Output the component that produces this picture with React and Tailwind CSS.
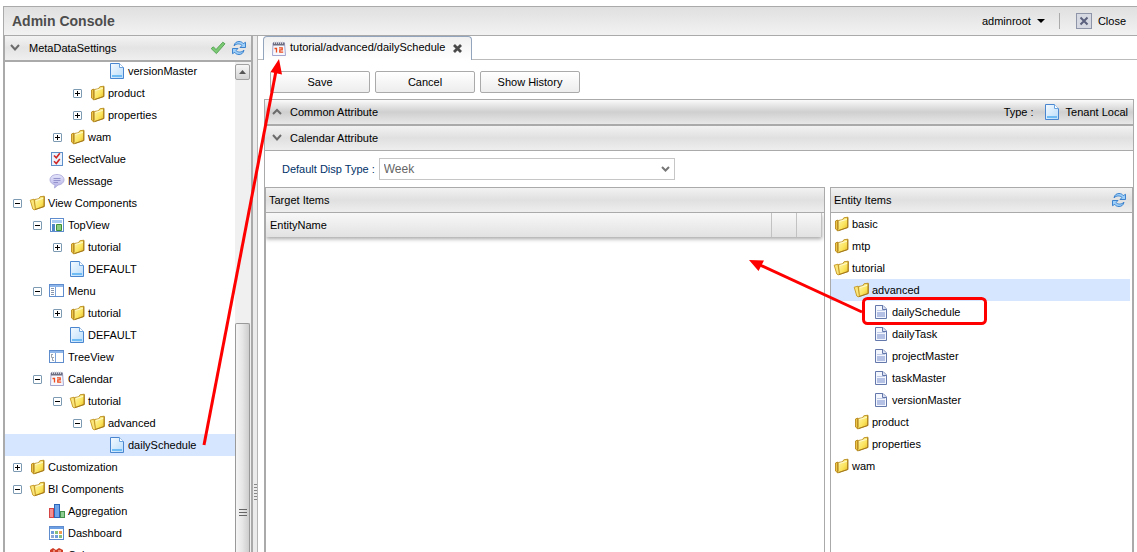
import { useState } from "react";

function Svg({ children, viewBox = "0 0 16 16" }) {
  return (
    <svg viewBox={viewBox} width="16" height="16" className="shrink-0" aria-hidden="true">
      {children}
    </svg>
  );
}

function Defs() {
  return (
    <svg width="0" height="0" className="absolute" aria-hidden="true">
      <defs>
        <linearGradient id="gold" x1="0" y1="0" x2="1" y2="1">
          <stop offset="0" stopColor="#fff9b8" />
          <stop offset="0.6" stopColor="#fbe45c" />
          <stop offset="1" stopColor="#e3b520" />
        </linearGradient>
        <linearGradient id="sky" x1="0" y1="0" x2="1" y2="1">
          <stop offset="0" stopColor="#f4faff" />
          <stop offset="1" stopColor="#b9dcfa" />
        </linearGradient>
        <linearGradient id="bubble" x1="0" y1="0" x2="0" y2="1">
          <stop offset="0" stopColor="#e6e6fb" />
          <stop offset="1" stopColor="#b3b0e6" />
        </linearGradient>
      </defs>
    </svg>
  );
}

const FolderClosed = () => (
  <Svg viewBox="-1 0 16 16">
    <path d="M1.5 5 3.5 4V14.5L1.5 13Z" fill="#eec74a" stroke="#b98a1b" strokeWidth="0.9" />
    <path d="M4.2 4.5 8.5 3.8 9.8 1.8 13.8 1.2V11.5L4.5 14.6 3.2 14.8 4.2 13Z" fill="url(#gold)" stroke="#b98a1b" strokeWidth="0.9" />
    <path d="M13.8 1.5V11.5L4.5 14.6" fill="none" stroke="#9a6f12" strokeWidth="0.8" />
    <path d="M5.3 5.4 12.8 3.4" stroke="#fffbd0" />
  </Svg>
);

const FolderOpen = () => (
  <Svg viewBox="-1 0 16 16">
    <path d="M4.5 4.5 8.8 3.8 10 1.8 14.2 1.2V11.5L5 14.6Z" fill="url(#gold)" stroke="#b98a1b" strokeWidth="0.9" />
    <path d="M14.2 1.5V11.5L5 14.6" fill="none" stroke="#9a6f12" strokeWidth="0.8" />
    <path d="M0.2 5.2 4 4.2 5.3 13.5 4.5 15 2.8 14Z" fill="#fbe67c" stroke="#c4961f" strokeWidth="0.9" />
    <path d="M6 5.4 13.2 3.4" stroke="#fffbd0" />
  </Svg>
);

const Page = () => (
  <Svg>
    <path d="M1.5 0.5H10.5L14.5 4.5V15.5H1.5Z" fill="url(#sky)" stroke="#4a86cf" />
    <path d="M10.5 0.5V4.5H14.5" fill="#fff" stroke="#6ba3de" />
    <path d="M3 12H13V14H3Z" fill="#6fbcf5" />
  </Svg>
);

const Doc = () => (
  <Svg viewBox="-1 0 16 16">
    <path d="M1.5 1.5H9L12.5 5V14.5H1.5Z" fill="#f4f6fd" stroke="#6478ab" />
    <path d="M8.5 1.5V5.5H12.5" fill="#dbe1f4" stroke="#6478ab" />
    <path d="M3 8H11V13H3Z" fill="#b4c1e4" />
    <path d="M3 6.5H11" stroke="#c0cbe8" />
  </Svg>
);

const SelectValue = () => (
  <Svg>
    <rect x="2.5" y="1.5" width="11" height="13" fill="#e9f2fd" stroke="#5f8fc9" />
    <path d="M5 4.5 7.3 6.8 10.8 2.3M5 10.2 7.3 12.5 10.8 8" fill="none" stroke="#cf2727" strokeWidth="1.6" />
  </Svg>
);

const Message = () => (
  <Svg>
    <path d="M8 1.5C12 1.5 15 3.7 15 6.8 15 9.6 12.4 11.7 9 12L5.5 15 6 11.8C3 11.2 1 9.3 1 6.8 1 3.7 4 1.5 8 1.5Z" fill="url(#bubble)" stroke="#a5a2d6" strokeWidth="0.8" />
    <path d="M4.5 5.5H11.5M4.5 7.5H11.5M4.5 9.5H9" stroke="#8f8cc8" strokeWidth="0.9" />
  </Svg>
);

const TopView = () => (
  <Svg>
    <rect x="1.5" y="1.5" width="13" height="13" fill="#fff" stroke="#5e8ccc" />
    <path d="M3 3H13V6H3Z" fill="#a9cbf3" />
    <path d="M3 7H6V14H3Z" fill="#4e86c8" />
    <path d="M7.5 7.5H12.5V13.5H7.5Z" fill="#8ccc80" stroke="#3f8f3a" />
  </Svg>
);

const MenuIcon = () => (
  <Svg>
    <rect x="0.5" y="1.5" width="14" height="12" fill="#fff" stroke="#5e8ccc" />
    <path d="M1 2H14V4H1Z" fill="#8fb6ea" />
    <path d="M6.5 4V13" stroke="#7ba3da" />
    <path d="M2 5.5H5M2 7.5H5M2 9.5H5M2 11.5H5" stroke="#8796ad" />
  </Svg>
);

const TreeIcon = () => (
  <Svg>
    <rect x="0.5" y="1.5" width="14" height="12" fill="#fff" stroke="#5e8ccc" />
    <path d="M1 2H14V4H1Z" fill="#8fb6ea" />
    <path d="M6.5 4V13" stroke="#7ba3da" />
    <path d="M2.5 5V8.5H5M2.5 5.5H4M3.5 8.5V11.5H5" stroke="#9aa3b0" fill="none" />
  </Svg>
);

const CalendarIcon = () => (
  <Svg>
    <path d="M2 2H13.5L14.5 14.5H1.5Z" fill="#f6f6fd" stroke="#9a9cc9" strokeWidth="0.9" />
    <path d="M2 1.5H13.5V4.5H2Z" fill="#6d6f80" />
    <path d="M3.5 0.5V3M5.5 0.5V3M7.5 0.5V3M9.5 0.5V3M11.5 0.5V3" stroke="#d5d6df" strokeWidth="0.9" />
    <path d="M3.5 7.5H5.5V11.5M8 6.8H11.2V8.8H8.8V11.2H12.2" fill="none" stroke="#ee4b1c" strokeWidth="1.3" />
  </Svg>
);

const Aggregation = () => (
  <Svg>
    <rect x="0.5" y="5.5" width="4" height="9" fill="#f58f8f" stroke="#d64545" />
    <rect x="5.5" y="1.5" width="5" height="13" fill="#6ea5ea" stroke="#2d66b8" />
    <rect x="11.5" y="8.5" width="4" height="6" fill="#8fce93" stroke="#43904a" />
  </Svg>
);

const Dashboard = () => (
  <Svg>
    <rect x="0.5" y="1.5" width="14" height="13" fill="#fff" stroke="#5e8ccc" />
    <path d="M1 2H14V4H1Z" fill="#6d9fe4" />
    <path d="M2 6H5V9H2ZM6 10H9V13H6Z" fill="#6e9bd9" />
    <path d="M6 6H9V9H6ZM10 10H13V13H10Z" fill="#86bf7b" />
    <path d="M10 6H13V9H10Z" fill="#ef9c50" />
    <path d="M2 10H5V13H2Z" fill="#8fa9d2" />
  </Svg>
);

const Cube = () => (
  <Svg>
    <path d="M1 3 4 1 7 3 10 1 14 3V14H1Z" fill="#cf3d26" />
    <path d="M4 4H6M9 4H12" stroke="#f3a58d" strokeWidth="1.5" />
  </Svg>
);

const Refresh = () => (
  <Svg>
    <path d="M3 5.8C3.5 3 5.5 1.5 8 1.5 10 1.5 11.3 2.3 12.3 3.6L14.5 2.3V7.5H9L11 5.5C9.5 3.6 5.5 3.2 3 5.8Z" fill="#9fd0fa" stroke="#2f79c8" strokeWidth="0.9" />
    <path d="M13 10.2C12.5 13 10.5 14.5 8 14.5 6 14.5 4.7 13.7 3.7 12.4L1.5 13.7V8.5H7L5 10.5C6.5 12.4 10.5 12.8 13 10.2Z" fill="#9fd0fa" stroke="#2f79c8" strokeWidth="0.9" />
  </Svg>
);

const Check = () => (
  <Svg>
    <path d="M1.2 8.6 3.4 6.8 6 9.6 12.8 2.2 15 3.8 6.4 13.6Z" fill="#7cc974" stroke="#4fa04f" strokeWidth="0.9" strokeLinejoin="round" />
  </Svg>
);

const Chevron = ({ up }) => (
  <Svg>
    <path d={up ? "M4 10 8 6 12 10" : "M4 5 8 9.5 12 5"} fill="none" stroke="#6b6b6b" strokeWidth="2" />
  </Svg>
);

const icons = {
  closed: FolderClosed,
  open: FolderOpen,
  page: Page,
  doc: Doc,
  select: SelectValue,
  message: Message,
  top: TopView,
  menu: MenuIcon,
  tree: TreeIcon,
  calendar: CalendarIcon,
  aggregation: Aggregation,
  dashboard: Dashboard,
  cube: Cube,
};

const metaTree = [
  [4, "", "page", "versionMaster"],
  [3, "+", "closed", "product"],
  [3, "+", "closed", "properties"],
  [2, "+", "closed", "wam"],
  [1, "", "select", "SelectValue"],
  [1, "", "message", "Message"],
  [0, "-", "open", "View Components"],
  [1, "-", "top", "TopView"],
  [2, "+", "closed", "tutorial"],
  [2, "", "page", "DEFAULT"],
  [1, "-", "menu", "Menu"],
  [2, "+", "closed", "tutorial"],
  [2, "", "page", "DEFAULT"],
  [1, "", "tree", "TreeView"],
  [1, "-", "calendar", "Calendar"],
  [2, "-", "open", "tutorial"],
  [3, "-", "open", "advanced"],
  [4, "", "page", "dailySchedule"],
  [0, "+", "closed", "Customization"],
  [0, "-", "open", "BI Components"],
  [1, "", "aggregation", "Aggregation"],
  [1, "", "dashboard", "Dashboard"],
  [1, "", "cube", "Cube"],
];

const entityTree = [
  [0, "closed", "basic"],
  [0, "closed", "mtp"],
  [0, "open", "tutorial"],
  [1, "open", "advanced"],
  [2, "doc", "dailySchedule"],
  [2, "doc", "dailyTask"],
  [2, "doc", "projectMaster"],
  [2, "doc", "taskMaster"],
  [2, "doc", "versionMaster"],
  [1, "closed", "product"],
  [1, "closed", "properties"],
  [0, "closed", "wam"],
];

const indents = ["pl-0", "pl-5", "pl-10", "pl-[60px]", "pl-20"];

function Expander({ sign }) {
  if (!sign) return <span className="w-[9px] shrink-0" />;
  return (
    <button aria-label={sign === "+" ? "Expand" : "Collapse"} className="shrink-0">
      <svg viewBox="0 0 9 9" width="9" height="9" className="block">
        <rect x="0.5" y="0.5" width="8" height="8" rx="0.5" fill="#fff" stroke="#7d9ab3" />
        <path d={sign === "+" ? "M2 4.5H7M4.5 2V7" : "M2 4.5H7"} stroke="#000" />
      </svg>
    </button>
  );
}

function TreeRow({ level, sign, icon, label, selected }) {
  const Icon = icons[icon];
  return (
    <li className={"h-[22px] pl-2 " + (selected ? "bg-[#d6e6fe]" : "")}>
      <div className={"flex h-full items-center " + indents[level]}>
        <Expander sign={sign} />
        <span className="flex items-center gap-[3px] pl-[7px]">
          <Icon />
          <span>{label}</span>
        </span>
      </div>
    </li>
  );
}

function Sidebar() {
  return (
    <aside className="flex w-[250px] shrink-0 flex-col border-x-2 border-[#aaa]">
      <div className="flex h-[26px] shrink-0 items-center border-b-2 border-[#aaa] bg-linear-to-b from-[#f3f3f3] via-[#e4e4e4] to-[#efefef] pr-1 pl-[2px]">
        <Chevron />
        <h2 className="flex-1 pl-[6px]">MetaDataSettings</h2>
        <button aria-label="Apply" className="mr-[5px]"><Check /></button>
        <button aria-label="Refresh"><Refresh /></button>
      </div>
      <div className="flex min-h-0 flex-1">
        <div className="min-w-0 flex-1 overflow-hidden">
          <ul className="-mt-[2px]">
            {metaTree.map(([level, sign, icon, label], i) => (
              <TreeRow key={i} level={level} sign={sign} icon={icon} label={label} selected={label === "dailySchedule"} />
            ))}
          </ul>
        </div>
        <div className="flex w-4 shrink-0 flex-col bg-[#f0f0f0] pr-px">
          <button aria-label="Scroll up" className="mt-[2px] flex h-4 items-center justify-center rounded-[2px] border border-[#a0a0a0] bg-linear-to-b from-[#f6f6f6] to-[#d4d4d4]">
            <svg viewBox="0 0 7 4" width="7" height="4"><path d="M3.5 0 7 4H0Z" fill="#555" /></svg>
          </button>
          <div className="flex-1" />
          <div className="flex h-[229px] items-end justify-center rounded-t-[2px] border border-b-0 border-[#999] bg-linear-to-r from-[#f5f5f5] via-[#e6e6e6] to-[#cdcdcd] pb-[34px]">
            <svg viewBox="0 0 8 10" width="8" height="10">
              <path d="M0 1.5H8M0 4.5H8M0 7.5H8" stroke="#666" />
            </svg>
          </div>
        </div>
      </div>
    </aside>
  );
}

const barBg = "bg-linear-to-b from-[#f2f2f2] via-[#e0e0e0] to-[#eeeeee]";

function ToolButton({ children }) {
  return (
    <button className="h-[22px] w-[100px] rounded-[2px] border border-[#aaa] bg-linear-to-b from-white to-[#ededed]">
      {children}
    </button>
  );
}

function TargetItems() {
  return (
    <section className="flex min-w-0 flex-1 flex-col border-x border-t border-[#aaa]">
      <h3 className={"flex h-[25px] items-center border-b border-[#aaa] pl-[3px] " + barBg}>Target Items</h3>
      <div className="overflow-hidden pr-[2px] pb-2">
        <table className="w-full table-fixed border-collapse bg-linear-to-b from-[#f8f8f8] to-[#e2e2e2] shadow-[0_2px_4px_rgba(0,0,0,0.35)]">
          <thead>
            <tr className="h-6">
              <th scope="col" className="pl-1 text-left font-normal">EntityName</th>
              <th scope="col" className="w-[25px] border-l border-[#c2c2c2]" />
              <th scope="col" className="w-[25px] border-x border-[#c2c2c2]" />
            </tr>
          </thead>
        </table>
      </div>
    </section>
  );
}

function EntityItems() {
  return (
    <section className="flex w-[303px] shrink-0 flex-col border-x border-t border-[#aaa]">
      <div className={"flex h-[25px] items-center justify-between border-b border-[#aaa] pr-[5px] pl-[3px] " + barBg}>
        <h3>Entity Items</h3>
        <button aria-label="Refresh entities"><Refresh /></button>
      </div>
      <ul className="pr-[2px]">
        {entityTree.map(([level, icon, label]) => {
          const Icon = icons[icon];
          return (
            <li key={label} className={"h-[22px] pl-[2px] " + (label === "advanced" ? "bg-[#d6e6fe]" : "")}>
              <div className={"flex h-full items-center gap-[3px] " + indents[level]}>
                <Icon />
                <span>{label}</span>
              </div>
            </li>
          );
        })}
      </ul>
    </section>
  );
}

function Annotations() {
  return (
    <svg className="pointer-events-none absolute top-0 left-0" width="1137" height="552" viewBox="0 0 1137 552" aria-hidden="true">
      <g stroke="#fe0000" strokeWidth="3" fill="none">
        <path d="M204 445 276 71" />
        <path d="M862 312 760 265" />
        <rect x="863.5" y="298.5" width="122" height="25" rx="4" />
      </g>
      <path d="M279 59 270.5 72 282 74.5ZM749 260 764 260.5 758.5 271Z" fill="#fe0000" />
    </svg>
  );
}

export default function App() {
  const [type, setType] = useState("Week");
  return (
    <div className="relative flex h-screen flex-col overflow-hidden bg-white pt-[6px] pl-[3px] font-['Liberation_Sans',Arial,sans-serif] text-[11px] leading-4 text-black">
      <Defs />
      <header className="flex h-[30px] shrink-0 items-center border-y border-l border-[#aaa] bg-linear-to-b from-[#e0e0e0] to-[#f2f2f2] pr-[11px] pl-2">
        <h1 className="flex-1 text-[14px] font-bold text-[#4d4d4d]">Admin Console</h1>
        <button className="flex items-center gap-[6px]">
          adminroot
          <svg viewBox="0 0 8 4" width="8" height="4"><path d="M0 0H8L4 4Z" fill="#000" /></svg>
        </button>
        <span className="mr-4 ml-[14px] h-4 w-px bg-[#aaa]" />
        <button className="flex items-center gap-[6px]">
          <Svg>
            <rect x="0.5" y="0.5" width="15" height="15" fill="#d6d9e2" stroke="#8f95a8" />
            <path d="M4.5 4.5 11.5 11.5M11.5 4.5 4.5 11.5" stroke="#5b617c" strokeWidth="2" />
          </Svg>
          Close
        </button>
      </header>
      <div className="flex min-h-0 flex-1">
        <Sidebar />
        <div className="flex w-[5px] shrink-0 items-center justify-center border-r border-[#b5b5b5] bg-[#ececec] pt-[396px]">
          <svg viewBox="0 0 3 18" width="3" height="18">
            <path d="M0 1.5H3M0 4.5H3M0 7.5H3M0 10.5H3M0 13.5H3M0 16.5H3" stroke="#888" />
          </svg>
        </div>
        <main className="flex min-w-0 flex-1 flex-col">
          <div className="flex h-6 shrink-0" role="tablist">
            <span className="w-[5px] border-b border-[#bbb]" />
            <div className="flex w-[209px] items-center rounded-t-[4px] border border-b-0 border-[#93a5bd] bg-linear-to-b from-[#f0f0f0] to-white pl-[7px]">
              <button role="tab" aria-selected="true" className="flex items-center gap-[3px]">
                <CalendarIcon />
                <span className="pb-[3px]">tutorial/advanced/dailySchedule</span>
              </button>
              <button aria-label="Close tab" className="pl-2">
                <svg viewBox="0 0 9 9" width="9" height="9" className="block"><path d="M1 1 8 8M8 1 1 8" stroke="#4a4a4a" strokeWidth="2.8" /></svg>
              </button>
            </div>
            <span className="flex-1 border-b border-[#bbb]" />
          </div>
          <div className="flex min-h-0 flex-1 flex-col pr-[3px] pl-[6px]">
            <div className="flex gap-[5px] pt-[11px] pb-[6px] pl-[6px]">
              <ToolButton>Save</ToolButton>
              <ToolButton>Cancel</ToolButton>
              <ToolButton>Show History</ToolButton>
            </div>
            <div className="flex min-h-0 flex-1 flex-col border border-b-0 border-[#aaa]">
              <div className="flex h-[26px] shrink-0 items-center border-b-2 border-[#aaa] bg-linear-to-b from-[#fafafa] via-[#cfcfcf] to-[#e8e8e8] pr-[5px] pl-1">
                <Chevron up />
                <h2 className="flex-1 pl-[5px]">Common Attribute</h2>
                <span className="pr-[10px]">Type :</span>
                <Page />
                <span className="pl-[6px]">Tenant Local</span>
              </div>
              <div className={"flex h-[25px] shrink-0 items-center border-b border-[#aaa] pl-1 " + barBg}>
                <Chevron />
                <h2 className="pl-[5px]">Calendar Attribute</h2>
              </div>
              <div className="flex shrink-0 items-center gap-1 py-[7px] pl-[17px]">
                <label htmlFor="disp-type" className="text-[#003168]">Default Disp Type :</label>
                <div className="grid w-[296px]">
                  <select
                    id="disp-type"
                    value={type}
                    onChange={(e) => setType(e.target.value)}
                    className="col-start-1 row-start-1 h-[22px] appearance-none border border-[#c6c6c6] bg-white pl-1 text-[12px] text-[#666]"
                  >
                    <option>Month</option>
                    <option>Week</option>
                    <option>Day</option>
                  </select>
                  <svg viewBox="0 0 9 6" width="9" height="6" className="pointer-events-none col-start-1 row-start-1 mr-[5px] self-center justify-self-end">
                    <path d="M1 1 4.5 4.5 8 1" fill="none" stroke="#777" strokeWidth="2" />
                  </svg>
                </div>
              </div>
              <div className="flex min-h-0 flex-1 gap-[5px]">
                <TargetItems />
                <EntityItems />
              </div>
            </div>
          </div>
        </main>
      </div>
      <Annotations />
    </div>
  );
}
